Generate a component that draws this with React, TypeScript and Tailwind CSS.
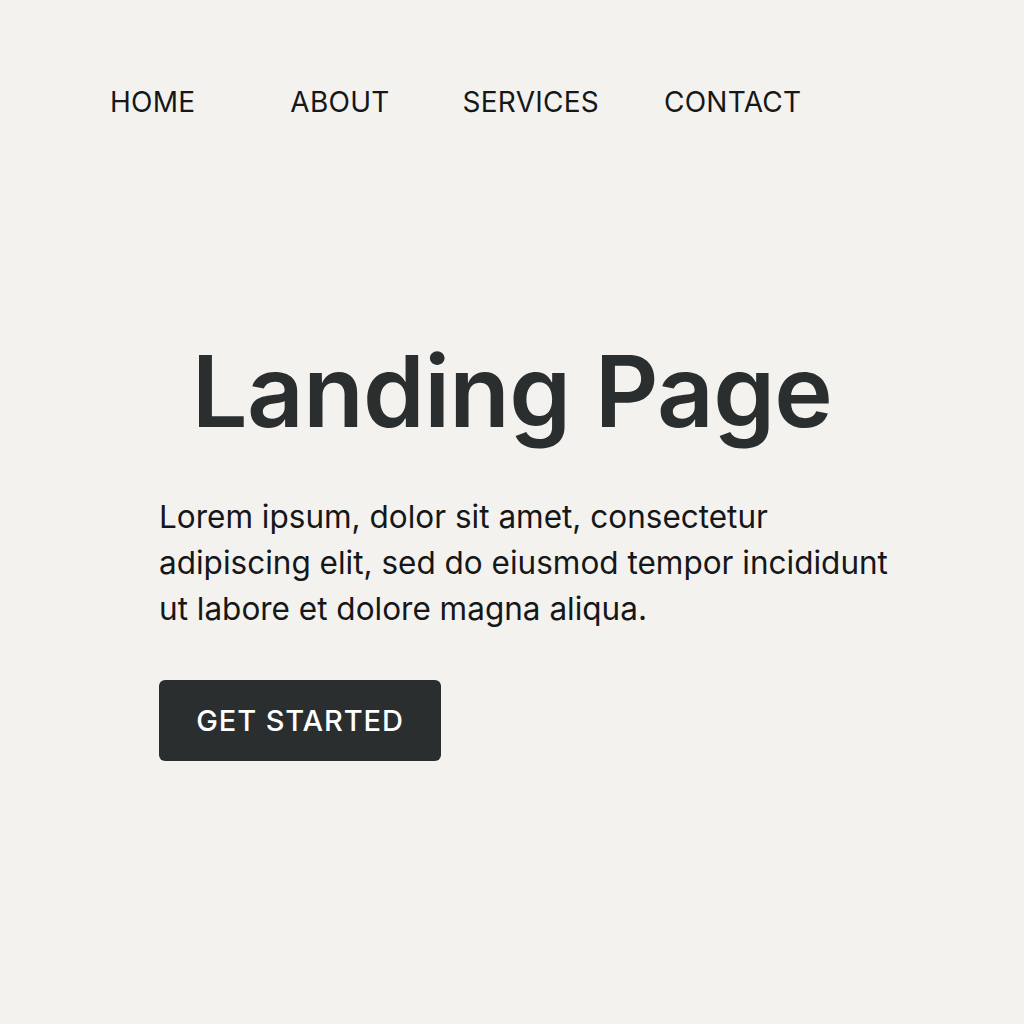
import React from 'react';

const navItems = [
  { label: 'HOME', className: '' },
  { label: 'ABOUT', className: 'ml-[95px]' },
  { label: 'SERVICES', className: 'ml-[73px]' },
  { label: 'CONTACT', className: 'ml-[65px]' },
];

const App: React.FC = () => {
  return (
    <div
      className="w-[1024px] h-[1024px] bg-[#f4f2ef] text-[#151718] overflow-hidden"
      style={{ fontFamily: 'Inter, "Liberation Sans", sans-serif' }}
    >
      <nav className="flex items-center pl-[110px] pt-[85px]">
        {navItems.map(item => (
          <a key={item.label} className={`text-[28px] leading-[34px] tracking-[0.25px] ${item.className}`}>
            {item.label}
          </a>
        ))}
      </nav>

      <main className="pt-[217px]">
        <h1 className="text-center text-[99px] leading-[110px] font-semibold text-[#2a2e2f] tracking-[-0.7px]">
          Landing Page
        </h1>

        <div className="pl-[159px] pt-[48px]">
          <p className="text-[31.5px] leading-[46px] tracking-[0px]">
            Lorem ipsum, dolor sit amet, consectetur
            <br />
            adipiscing elit, sed do eiusmod tempor incididunt
            <br />
            ut labore et dolore magna aliqua.
          </p>

          <button className="mt-[48px] w-[282px] h-[81px] rounded-[6px] bg-[#2a2e2f] text-white text-[29px] font-medium tracking-[0.9px]">
            GET STARTED
          </button>
        </div>
      </main>
    </div>
  );
};

export default App;
